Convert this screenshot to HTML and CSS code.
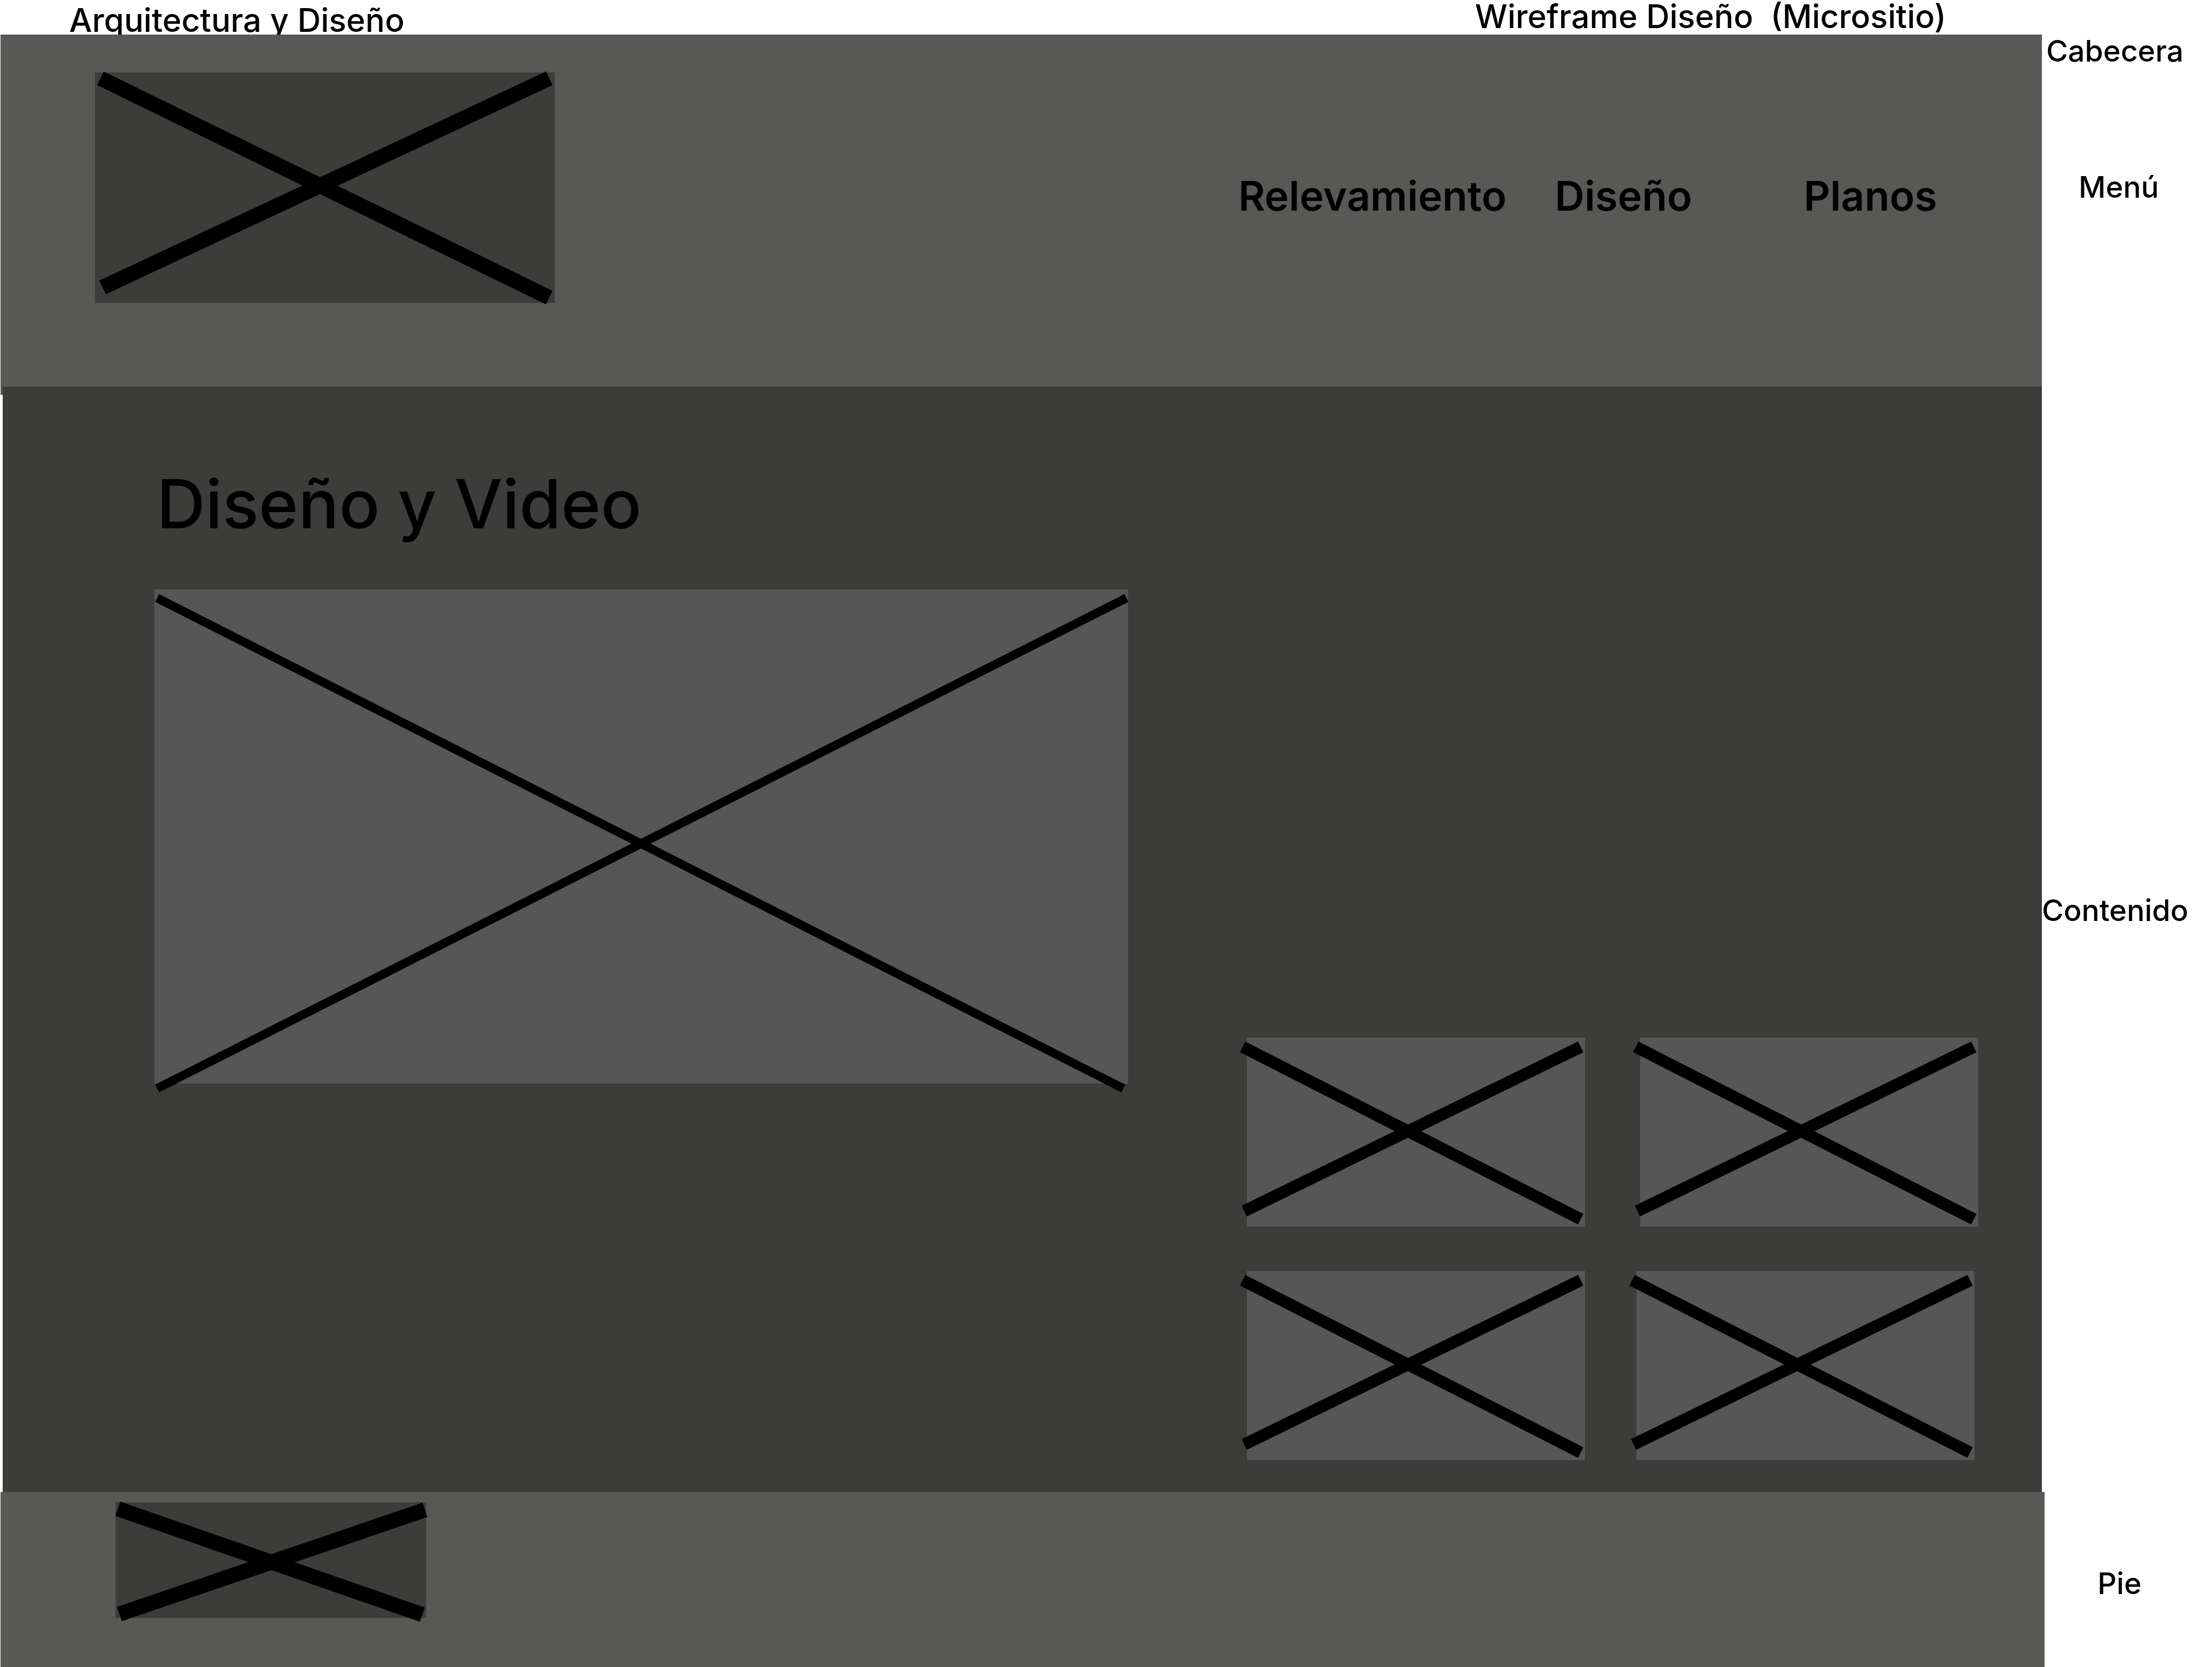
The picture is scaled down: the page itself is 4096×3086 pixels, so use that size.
FILE: index.html
```html
<!DOCTYPE html>
<html lang="es">
<head>
<meta charset="utf-8">
<meta name="viewport" content="width=device-width, initial-scale=1">
<title>Wireframe Diseño (Micrositio)</title>
<link rel="stylesheet" href="styles.css">
</head>
<body>
<div class="page">
  <div class="titles">
    <p class="project">Arquitectura y Diseño</p>
    <p class="sheet">Wireframe Diseño&nbsp; (Micrositio)</p>
  </div>

  <div class="row row-header">
    <header class="header">
      <svg class="box dark header-logo" viewBox="0 0 851 427" role="img" aria-label="Logo">
        <path class="cross" stroke-width="28" d="M10 11 841 417M841 11 14 398"/>
      </svg>
      <nav class="menu">
        <a href="#relevamiento">Relevamiento</a>
        <a href="#diseno">Diseño</a>
        <a href="#planos">Planos</a>
      </nav>
    </header>
    <aside class="notes">
      <p class="note note-header">Cabecera</p>
      <p class="note note-menu">Menú</p>
    </aside>
  </div>

  <div class="row row-content">
    <main class="content">
      <section class="feature">
        <h1 class="heading">Diseño y Video</h1>
        <svg class="box light" viewBox="0 0 1803 915" role="img" aria-label="Video">
          <path class="cross" stroke-width="16" d="M5 16 1794 924M1800 16 5 924"/>
        </svg>
      </section>
      <section class="gallery">
        <div class="thumbs">
          <svg class="box light" viewBox="0 0 626 350" role="img" aria-label="Imagen 1">
            <path class="cross" stroke-width="22" d="M-8 17 618 336M618 17-5 321"/>
          </svg>
          <svg class="box light" viewBox="0 0 626 350" role="img" aria-label="Imagen 2">
            <path class="cross" stroke-width="22" d="M-8 17 618 336M618 17-5 321"/>
          </svg>
        </div>
        <div class="thumbs thumbs-tight">
          <svg class="box light" viewBox="0 0 626 350" role="img" aria-label="Imagen 3">
            <path class="cross" stroke-width="22" d="M-8 17 618 336M618 17-5 321"/>
          </svg>
          <svg class="box light" viewBox="0 0 626 350" role="img" aria-label="Imagen 4">
            <path class="cross" stroke-width="22" d="M-8 17 618 336M618 17-5 321"/>
          </svg>
        </div>
      </section>
    </main>
    <aside class="notes notes-middle">
      <p class="note note-content">Contenido</p>
    </aside>
  </div>

  <div class="row row-footer">
    <footer class="footer">
      <svg class="box dark footer-logo" viewBox="0 0 575 214" role="img" aria-label="Logo">
        <path class="cross" stroke-width="28" d="M4 12 568 208M573 14 7 207"/>
      </svg>
    </footer>
    <aside class="notes notes-middle">
      <p class="note note-footer">Pie</p>
    </aside>
  </div>
</div>
</body>
</html>
```
FILE: styles.css
```css
* {
  box-sizing: border-box;
}

body {
  margin: 0;
  background: #fff;
  color: #000;
  font-family: Inter, "Open Sans", sans-serif;
  font-weight: 500;
}

p,
h1 {
  margin: 0;
}

.page {
  display: grid;
  grid-template-rows: 64px auto 1fr auto;
  min-height: 100vh;
}

.titles {
  display: flex;
  justify-content: space-between;
  align-items: flex-start;
  height: 64px;
  padding: 0 492px 0 128px;
  font-size: 60px;
  white-space: nowrap;
}

.project {
  line-height: 74px;
}

.sheet {
  line-height: 60px;
}

.row {
  display: grid;
  grid-template-columns: minmax(0, 1fr) 315px;
}

/* The header runs on a little way behind the content block. */
.row-header {
  position: relative;
  margin-bottom: -15px;
}

.row-content {
  position: relative;
}

.row-footer {
  grid-template-columns: minmax(0, 1fr) 310px;
}

.box {
  display: block;
  width: 100%;
  height: auto;
  overflow: visible;
}

.dark {
  background: #3c3c3a;
}

.light {
  background: #565656;
}

.cross {
  fill: none;
  stroke: #000;
}

.header {
  display: flex;
  justify-content: space-between;
  align-items: flex-start;
  margin-left: 1px;
  padding: 70px 0 170px 175px;
  background: #585856;
}

.header-logo {
  flex: 0 1 851px;
  min-width: 0;
}

.menu {
  display: grid;
  grid-template-columns: 586px 461px 441px;
  padding-top: 180px;
  font-size: 76px;
  font-weight: 600;
  line-height: 96px;
}

.menu a {
  color: inherit;
  text-decoration: none;
}

.content {
  display: grid;
  grid-template-columns: minmax(0, 1803fr) minmax(0, 1354fr);
  column-gap: 220px;
  margin-left: 5px;
  padding: 137px 118px 59px 281px;
  background: #3c3c3a;
}

.heading {
  padding-left: 4px;
  margin-bottom: 78px;
  font-size: 125px;
  font-weight: 500;
  line-height: 160px;
}

.gallery {
  display: flex;
  flex-direction: column;
  justify-content: flex-end;
  gap: 82px;
}

.thumbs {
  display: grid;
  grid-template-columns: 1fr 1fr;
  gap: 102px;
}

.thumbs-tight {
  gap: 95px;
  padding-right: 7px;
}

.footer {
  margin-left: 1px;
  padding: 19px 0 91px 213px;
  background: #585856;
}

.footer-logo {
  width: 575px;
  max-width: 100%;
}

.notes {
  font-size: 55px;
  line-height: 60px;
}

.notes-middle {
  align-self: center;
}

.note-header {
  padding: 0 0 192px 8px;
}

.note-menu {
  padding-left: 68px;
}

.note-content {
  padding-bottom: 108px;
}

.note-footer {
  padding: 14px 0 0 98px;
}
```
